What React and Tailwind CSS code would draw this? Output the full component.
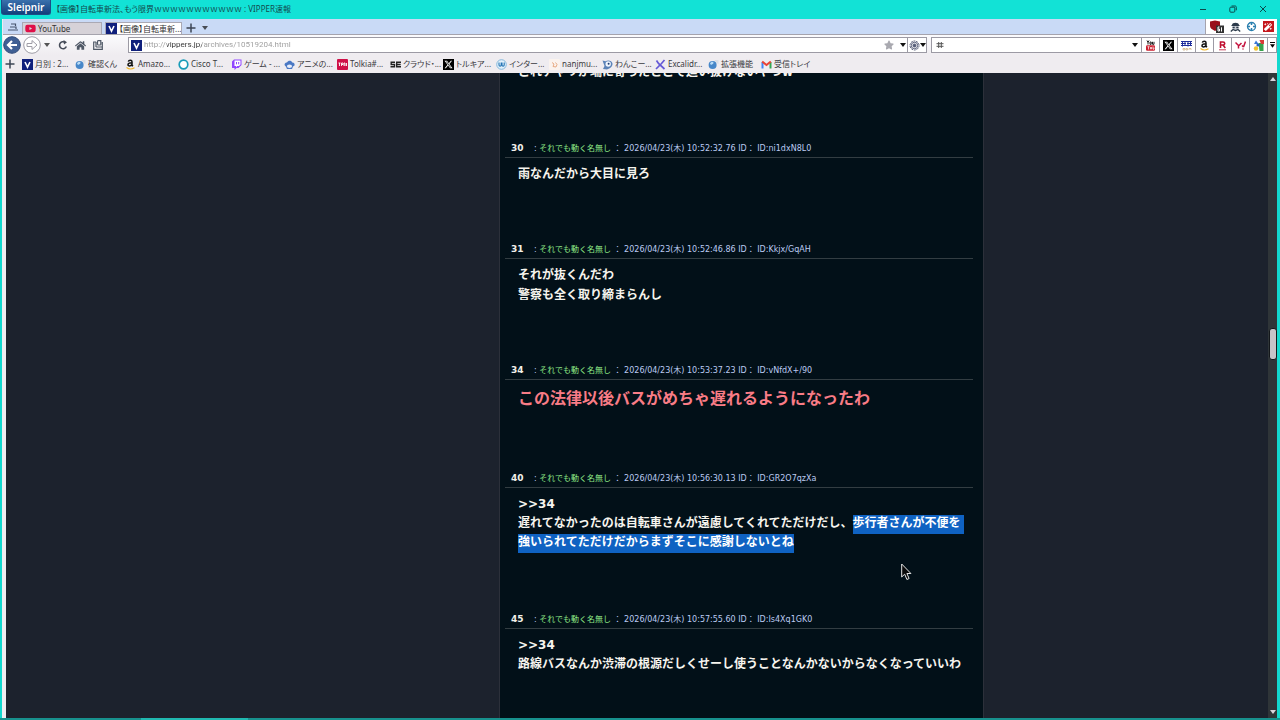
import clsx from "clsx";
import { FaHome, FaMagic, FaStar, FaYoutube } from "react-icons/fa";
import { FaXTwitter } from "react-icons/fa6";

const Caret = ({ className }) => (
  <svg viewBox="0 0 6 4" className={clsx("w-[6px] h-1 shrink-0", className)} fill="#111">
    <path d="M0 0h6L3 4z" />
  </svg>
);

const Plus = () => (
  <svg viewBox="0 0 10 10" className="w-[10px] h-[10px] shrink-0" stroke="#3d4554" strokeWidth="1.5">
    <path d="M5 .5v9M.5 5h9" />
  </svg>
);

const VIcon = () => (
  <svg viewBox="0 0 11 11" className="w-[11px] h-[11px] shrink-0">
    <rect width="11" height="11" fill="#10207c" />
    <path d="M3 3l2.5 5.2L8 3" fill="none" stroke="#fff" strokeWidth="1.6" />
  </svg>
);

const XIcon = () => (
  <span className="w-[11px] h-[11px] bg-black text-white flex items-center justify-center">
    <FaXTwitter size={9} />
  </span>
);

const GlobeIcon = () => (
  <svg viewBox="0 0 11 11" className="w-[11px] h-[11px]">
    <circle cx="4.6" cy="6" r="4" fill="#4787c9" />
    <path d="M2 4.5c1-2 3-2 3.5-1S4 5.5 3 6z" fill="#b9dcf7" />
    <path d="M6.5 1h4v4l-2-1z" fill="#d9dee6" />
  </svg>
);

const AmazonIcon = () => (
  <svg viewBox="0 0 11 11" className="w-[11px] h-[11px]" fill="none">
    <path d="M3.3 2.6C3.8.8 7 .7 7 2.8v3.6l1 .8M7 3.8C3.8 3.8 3 4.6 3 5.8c0 1.7 3.2 1.5 4-.6" stroke="#111" strokeWidth="1.5" />
    <path d="M1.5 8.5c2.5 1.8 5.5 1.8 8 .2" stroke="#f0b429" strokeWidth="1.1" />
  </svg>
);

const RingIcon = () => (
  <svg viewBox="0 0 11 11" className="w-[11px] h-[11px]">
    <circle cx="5.5" cy="5.5" r="4.3" fill="#fff" stroke="#189bb8" strokeWidth="1.7" />
  </svg>
);

const TwitchIcon = () => (
  <svg viewBox="0 0 11 11" className="w-[11px] h-[11px]">
    <path d="M1 2.5L3 .5h7.5V6l-3 3h-2l-2 2V9H1z" fill="#9146ff" />
    <path d="M3.5 1.5h6v4L8 7H6.2L5 8.2V7H3.5z" fill="#fff" />
    <path d="M5.5 3v2.3M7.7 3v2.3" stroke="#9146ff" />
  </svg>
);

const CloudIcon = () => (
  <svg viewBox="0 0 11 11" className="w-[11px] h-[11px]">
    <path d="M.5 6C.5 4 2 3.500 3 3.500 4 1 7.500 1 8.300 3.600c2 .2 2.700 1.500 2.200 3L9 7.500 8 10H3L2 7.800z" fill="#4a78c4" />
    <ellipse cx="5.5" cy="7.2" rx="2.6" ry="1.7" fill="#e8eefb" />
  </svg>
);

const TrpgIcon = () => (
  <svg viewBox="0 0 11 11" className="w-[11px] h-[11px]">
    <rect width="11" height="11" rx="1" fill="#cf1048" />
    <path d="M1.500 4h2M2.500 4v3M4.500 7V4H6v1.500H4.500M7 7V4h1v3M9.500 7V4" stroke="#fff" strokeWidth=".9" fill="none" />
  </svg>
);

const SeIcon = () => (
  <svg viewBox="0 0 11 11" className="w-[11px] h-[11px]" fill="none" stroke="#222" strokeWidth="1.4">
    <path d="M5 3.200H1.200v2.300H4.500v2.300H.5M11 3.200H6.700v4.600H11M6.700 5.500h4" />
  </svg>
);

const UIcon = () => (
  <svg viewBox="0 0 11 11" className="w-[11px] h-[11px]" fill="none">
    <circle cx="5.5" cy="5.5" r="4.8" fill="#e2f1fb" stroke="#86b8dc" />
    <path d="M3 3.500v2.500c0 1.500 2.200 1.500 2.200 0V3.500M6 3.500v2.500c0 1.500 2.200 1.500 2.200 0V3.500" stroke="#2474b5" strokeWidth="1.1" />
  </svg>
);

const NanjIcon = () => (
  <svg viewBox="0 0 11 11" className="w-[11px] h-[11px]">
    <rect width="11" height="11" rx="1" fill="#fbf3ee" />
    <path d="M3 3.500l2 1.500-1 2.500 3 .5 1-2.500-1.500-2" fill="none" stroke="#e8ab84" />
  </svg>
);

const DogIcon = () => (
  <svg viewBox="0 0 11 11" className="w-[11px] h-[11px]">
    <path d="M.5 1.500l3 .8C6 .8 10 1.500 10.500 4.500 10.800 7.500 8 9.500 5 10.500L1 10l1.500-3z" fill="#5c83b8" />
    <circle cx="6.2" cy="5" r="2.700" fill="#eef4fd" />
    <circle cx="6.6" cy="4.8" r="1" fill="#1d3a6e" />
  </svg>
);

const ExcalidrawIcon = () => (
  <svg viewBox="0 0 11 11" className="w-[11px] h-[11px]" stroke="#6558d6" fill="none">
    <path d="M1.500 1.500l2 3 6 5.500M9.500 1l-3 3.500L1 10" strokeWidth="1.7" />
  </svg>
);

const GmailIcon = () => (
  <svg viewBox="0 0 11 11" className="w-[11px] h-[11px]" fill="none" strokeWidth="2">
    <path d="M1.500 9.500V3" stroke="#4285f4" />
    <path d="M9.500 9.500V3" stroke="#34a853" />
    <path d="M1.200 2.500l4.300 3.500 4.300-3.500" stroke="#ea4335" />
  </svg>
);

const bookmarks = [
  { name: "月別 : 2...", Icon: VIcon },
  { name: "確認くん", Icon: GlobeIcon, short: true },
  { name: "Amazo...", Icon: AmazonIcon },
  { name: "Cisco T...", Icon: RingIcon },
  { name: "ゲーム - ...", Icon: TwitchIcon },
  { name: "アニメの...", Icon: CloudIcon },
  { name: "Tolkia#...", Icon: TrpgIcon },
  { name: "クラウド・...", Icon: SeIcon },
  { name: "トルキア...", Icon: XIcon },
  { name: "インター...", Icon: UIcon },
  { name: "nanjmu...", Icon: NanjIcon },
  { name: "わんこー...", Icon: DogIcon },
  { name: "Excalidr...", Icon: ExcalidrawIcon },
  { name: "拡張機能", Icon: GlobeIcon },
  { name: "受信トレイ", Icon: GmailIcon },
];

const YouTubeSearchIcon = () => (
  <svg viewBox="0 0 11 11" className="w-[11px] h-[11px]" fill="none">
    <path d="M2 .5l1 2 1-2M3 2.500V4.500M5 2h1.200v2.300H5zM7.500 1.800v2.500H9V1.800" stroke="#222" />
    <rect x="1" y="5.2" width="9" height="5.5" rx="1.2" fill="#cc2030" />
    <path d="M2.500 6.700h2M3.500 6.700v2.800M5.500 7v2h1V7M8 6.500v2.700h1V7.500" stroke="#fff" strokeWidth=".7" />
  </svg>
);

const KakakuIcon = () => (
  <svg viewBox="0 0 11 11" className="w-[11px] h-[11px]" fill="none" stroke="#1f2d9c">
    <path d="M0 1.500h11M0 3.500h5M6 3.500h5M0 5.500h11M1.500 1v5.500M4 1v5M7 1v5.500M9.500 1v5" />
    <path d="M2 8.500h2v1.500H2zM5 8.500h1.500v1.500H5zM8 10V8.500h2V10" stroke="#c9a878" strokeWidth=".7" />
  </svg>
);

const RakutenIcon = () => (
  <svg viewBox="0 0 11 11" className="w-[11px] h-[11px]" fill="none" stroke="#bf1030">
    <path d="M3.500 8V2h2.500c2.300 0 2.300 3 0 3H3.500M6 5l2.300 3" strokeWidth="1.6" />
    <path d="M2 9.800h7" strokeWidth=".8" />
  </svg>
);

const YahooIcon = () => (
  <svg viewBox="0 0 11 11" className="w-[11px] h-[11px]" fill="none" stroke="#c4103c" strokeWidth="1.5">
    <path d="M.5 2.500l3 3v3M6.500 3l-3 3M7 5.500l1.500 1.500M10.500 1.500L8.500 7M8 8.500v1" />
  </svg>
);

const MapsIcon = () => (
  <svg viewBox="0 0 11 11" className="w-[11px] h-[11px]">
    <path d="M1 4l2-3.500L5.500 4z" fill="#3b78d8" />
    <circle cx="3" cy="8.5" r="2.200" fill="#f2c230" />
    <path d="M5.500 3h5v8h-4z" fill="#35a24c" />
    <path d="M6.500 0H11v4H8z" fill="#d83a36" />
    <circle cx="5" cy="5" r="1.6" fill="#2d62c0" />
  </svg>
);

const searchSites = [
  { name: "YouTube", Icon: YouTubeSearchIcon },
  { name: "X", Icon: XIcon },
  { name: "価格.com", Icon: KakakuIcon },
  { name: "Amazon", Icon: AmazonIcon },
  { name: "楽天", Icon: RakutenIcon },
  { name: "Yahoo!", Icon: YahooIcon },
  { name: "Google", Icon: MapsIcon },
];

const Selected = ({ children, className }) => (
  <mark className={clsx("bg-[#0f62c2] text-white pt-px pb-[4px]", className)}>{children}</mark>
);

const posts = [
  {
    no: 30,
    date: "2026/04/23(木) 10:52:32.76",
    id: "ni1dxN8L0",
    lines: ["雨なんだから大目に見ろ"],
  },
  {
    no: 31,
    date: "2026/04/23(木) 10:52:46.86",
    id: "Kkjx/GqAH",
    lines: ["それが抜くんだわ", "警察も全く取り締まらんし"],
  },
  {
    no: 34,
    date: "2026/04/23(木) 10:53:37.23",
    id: "vNfdX+/90",
    variant: "big",
    lines: ["この法律以後バスがめちゃ遅れるようになったわ"],
  },
  {
    no: 40,
    date: "2026/04/23(木) 10:56:30.13",
    id: "GR2O7qzXa",
    variant: "reply",
    lines: [
      <>
        遅れてなかったのは自転車さんが遠慮してくれてただけだし、
        <Selected className="pr-[3px]">歩行者さんが不便を</Selected>
      </>,
      <Selected>強いられてただけだからまずそこに感謝しないとね</Selected>,
    ],
  },
  {
    no: 45,
    date: "2026/04/23(木) 10:57:55.60",
    id: "Is4Xq1GK0",
    variant: "reply",
    lines: ["路線バスなんか渋滞の根源だしくせーし使うことなんかないからなくなっていいわ"],
  },
];

const bodyStyles = {
  normal: "pt-[6px] pb-[55px] text-[12px] leading-5 text-[#f6f4ee]",
  big: "pt-[5px] pb-[56px] text-[16px] leading-[27px] text-[#f97c86]",
  reply: "pt-[7px] pb-[57px] text-[12px] leading-[19px] text-[#f6f4ee]",
};

const TitleBar = () => (
  <header className="h-[19px] shrink-0 flex items-start bg-[#12e2d6] pl-px">
    <button className="w-[50px] h-[15px] rounded-b-[3px] border border-t-0 border-[#1d4d86] bg-gradient-to-b from-[#3a71ad] to-[#123f7c] text-white text-[10px] leading-[14px] font-semibold">
      Sleipnir
    </button>
    <h1 className="ml-[5px] h-[18px] text-[8px] leading-[18px] text-[#134a4e] whitespace-nowrap">
      <span className="[font-feature-settings:'palt']">【画像】自転車新法、もう限界</span>
      ｗｗｗｗｗｗｗｗｗｗｗ : VIPPER速報
    </h1>
    <div className="ml-auto h-[18px] flex items-center gap-[22px] pr-[13px] text-[#0b4a4c]">
      <button aria-label="最小化">
        <svg viewBox="0 0 8 8" className="w-2 h-2" stroke="currentColor"><path d="M1 4.500h6" /></svg>
      </button>
      <button aria-label="元に戻す">
        <svg viewBox="0 0 8 8" className="w-2 h-2" fill="none" stroke="currentColor">
          <rect x=".8" y="2.2" width="5" height="5" rx="1" />
          <path d="M2.500 1h3.500c1 0 1.300.5 1.300 1.300v3" />
        </svg>
      </button>
      <button aria-label="閉じる">
        <svg viewBox="0 0 8 8" className="w-2 h-2" stroke="currentColor"><path d="M1 1l6 6M7 1L1 7" /></svg>
      </button>
    </div>
  </header>
);

const TabBar = () => (
  <div className="h-4 shrink-0 flex bg-[#c9daf6] border-b border-[#a5a3ad] text-[#333]">
    <button aria-label="タブ一覧" className="w-[19px] flex items-center justify-center">
      <svg viewBox="0 0 10 8" className="w-[10px] h-2" fill="none" stroke="#46536c" strokeWidth="1.2">
        <path d="M3 1h4.500v2M2 4h6v2M0 7h10" />
      </svg>
    </button>
    <div role="tablist" className="flex pt-[3px] text-[8px] leading-3">
      <button role="tab" aria-selected="false" className="w-[80px] flex items-center gap-[2px] pl-[2px] bg-[#d6d2d8] border border-b-0 border-[#aaa9b4]">
        <FaYoutube size={11} color="#e01048" />
        YouTube
      </button>
      <button role="tab" aria-selected="true" className="ml-[3px] w-[77px] flex items-center gap-[2px] overflow-hidden bg-white border border-b-0 border-[#aaa9b4] whitespace-nowrap [font-feature-settings:'palt']">
        <VIcon />
        【画像】自転車新...
      </button>
    </div>
    <button aria-label="新しいタブ" className="ml-[4px] pt-[2px]"><Plus /></button>
    <button aria-label="タブメニュー" className="ml-[6px] pt-[2px]"><Caret className="opacity-70" /></button>
    <div className="ml-auto w-[72px] flex items-center justify-between pl-[4px] pr-[3px] bg-white border-l border-[#a5a3ad]">
      <button aria-label="広告ブロック">
        <svg viewBox="0 0 14 13" className="w-[14px] h-[13px]">
          <path d="M5 .5l5 1v4.500c0 2-2 3.500-5 5-3-1.500-5-3-5-5V1.500z" fill="#99101c" />
          <rect x="6" y="5.5" width="8" height="7.5" fill="#333" />
          <path d="M9.500 7H8v4h1.500V9H8M11.500 7.300V11.500" fill="none" stroke="#fff" />
        </svg>
      </button>
      <button aria-label="プライバシー">
        <svg viewBox="0 0 11 11" className="w-[11px] h-[11px]">
          <path d="M2 4C2 1 9 1 9 4l1 1H1z" fill="#2c3a4a" />
          <path d="M2.500 5h6v2.500l-1 2h-4z" fill="#c8ccd4" />
          <path d="M2.500 6.500h2.200M6.300 6.500h2.200M.8 10.500L3 8.500l2.500 1 2.500-1 2.200 2" fill="none" stroke="#2c3a4a" strokeWidth="1.3" />
        </svg>
      </button>
      <button aria-label="ターゲット">
        <svg viewBox="0 0 11 11" className="w-[11px] h-[11px]" fill="none" stroke="#2b7fae">
          <circle cx="5.5" cy="5.5" r="4" strokeWidth="1.3" />
          <path d="M5.500 1v3M5.500 7v3M1 5.500h3M7 5.500h3" strokeWidth="1.5" />
        </svg>
      </button>
      <button aria-label="ツール" className="w-[11px] h-[11px] bg-[#c4161c] text-white flex items-center justify-center">
        <FaMagic size={8} />
      </button>
    </div>
  </div>
);

const AddressBar = () => (
  <div className="h-5 shrink-0 flex items-center bg-gradient-to-b from-[#fbfbfd] to-[#efecf0]">
    <button aria-label="戻る">
      <svg viewBox="0 0 18 18" className="w-[18px] h-[18px]">
        <circle cx="9" cy="9" r="8.3" fill="#3f5f94" stroke="#2f4a78" />
        <path d="M14 9H5M9 5L5 9l4 4" fill="none" stroke="#fff" strokeWidth="2.2" />
      </svg>
    </button>
    <button aria-label="進む" className="ml-[2px]">
      <svg viewBox="0 0 18 18" className="w-[18px] h-[18px]" fill="#fff" stroke="#9f9da6">
        <circle cx="9" cy="9" r="8.3" />
        <path d="M4 7.500h5V4.500L14 9l-5 4.500v-3H4z" />
      </svg>
    </button>
    <button aria-label="履歴" className="ml-[3px]"><Caret className="opacity-70" /></button>
    <button aria-label="再読み込み" className="ml-[8px]">
      <svg viewBox="0 0 10 10" className="w-[10px] h-[10px]" fill="none" stroke="#454b58" strokeWidth="1.6">
        <path d="M8.300 6.500A3.500 3.500 0 1 1 7 2.300" />
        <path d="M5.500 0L9 2.200 6 4.500z" fill="#454b58" stroke="none" />
      </svg>
    </button>
    <button aria-label="ホーム" className="ml-[7px] text-[#4f5866]"><FaHome size={11} /></button>
    <button aria-label="保存" className="ml-[7px]">
      <svg viewBox="0 0 10 10" className="w-[10px] h-[10px]" fill="none" stroke="#4f5866" strokeWidth="1.2">
        <path d="M3 2H.7v7.300h8.600V2M3 2v5M3 7h6M4.500.7h3.300v4M4.500.7v4M4.500 5h3.300" />
      </svg>
    </button>
    <form className="ml-[25px] h-4 grow flex items-center bg-white border border-[#9c9aa4]">
      <label htmlFor="url" className="px-[2px]"><VIcon /></label>
      <input
        id="url"
        aria-label="アドレス"
        defaultValue="http://vippers.jp/archives/10519204.html"
        className="grow min-w-0 h-[14px] font-['Roboto',sans-serif] text-[8px] leading-[14px] outline-none text-transparent bg-clip-text bg-[linear-gradient(to_right,#9a9a9a_23px,#333_23px,#333_58px,#9a9a9a_58px)]"
      />
      <button type="button" aria-label="お気に入り" className="text-[#a9a9b0]"><FaStar size={10} /></button>
      <button type="button" aria-label="履歴一覧" className="ml-[6px] mr-px"><Caret /></button>
      <button type="button" aria-label="エンジン" className="h-[14px] pl-px flex items-center border-l border-[#9c9aa4]">
        <svg viewBox="0 0 11 11" className="w-[11px] h-[11px]" fill="none" stroke="#555c78">
          <circle cx="5.5" cy="5.5" r="4.5" strokeDasharray="2 .8" />
          <circle cx="5.5" cy="5.5" r="3.2" />
          <circle cx="5.5" cy="5.5" r="1.5" fill="#555c78" />
        </svg>
        <Caret />
      </button>
    </form>
    <form className="ml-[4px] w-[346px] h-4 shrink-0 flex items-center bg-white border border-[#9c9aa4]">
      <label htmlFor="search" className="px-[4px]">
        <svg viewBox="0 0 8 8" className="w-2 h-2" stroke="#555"><path d="M2.700 1v6M5.300 1v6M.5 2.700h7M.5 5.300h7" /></svg>
      </label>
      <input id="search" aria-label="検索" className="grow min-w-0 h-[14px] text-[8px] outline-none" />
      <button type="button" aria-label="検索履歴" className="mr-[3px]"><Caret /></button>
      {searchSites.map(({ name, Icon }) => (
        <button key={name} type="button" aria-label={name} className="w-[18px] h-[14px] shrink-0 flex items-center justify-center border-l border-[#9c9aa4]">
          <Icon />
        </button>
      ))}
      <button type="button" aria-label="その他" className="w-[9px] h-[14px] shrink-0 flex flex-col items-center justify-center gap-px border-l border-[#9c9aa4]">
        <span className="w-[5px] h-px bg-black" />
        <svg viewBox="0 0 6 4" className="w-[5px] h-1"><path d="M0 0h6L3 4z" /></svg>
      </button>
    </form>
  </div>
);

const BookmarkBar = () => (
  <nav className="h-[18px] shrink-0 flex items-center overflow-hidden bg-[#efecf0] pl-[2px] text-[8px] text-[#3a3a40] whitespace-nowrap">
    <button aria-label="追加" className="mr-[7px]"><Plus /></button>
    {bookmarks.map(({ name, Icon, short }) => (
      <a key={name} href="#" className={clsx("shrink-0 flex items-center gap-[2px]", short ? "w-[50px]" : "w-[53px]")}>
        <Icon />
        <span className="[font-feature-settings:'palt']">{name}</span>
      </a>
    ))}
  </nav>
);

const Post = ({ post }) => (
  <article>
    <div className="h-5 flex items-baseline mr-[10px] ml-[5px] pl-[6px] pt-[4px] border-b border-[#333d42] text-[8px] leading-3 text-[#bccbf2] whitespace-nowrap">
      <b className="w-[23px] text-[9px] text-[#f3f1ea]">{post.no}</b>
      <p>
        : <span className="text-[#8fe987]">それでも動く名無し</span> ： {post.date} ID： ID:{post.id}
      </p>
    </div>
    <div className={clsx("pl-[18px] font-bold whitespace-nowrap", bodyStyles[post.variant ?? "normal"])}>
      {post.variant === "reply" && <a href="#" className="block">&gt;&gt;34</a>}
      {post.lines.map((line, i) => (
        <p key={i}>{line}</p>
      ))}
    </div>
  </article>
);

const Pointer = () => (
  <svg viewBox="0 0 11 18" className="absolute left-[401px] top-[490px] w-[11px] h-[18px]">
    <path d="M.7 1v13l3-2.800 2.200 5.300 2.200-1-2.200-5h4z" fill="#0a0a0a" stroke="#e6e6e6" />
  </svg>
);

const Scrollbar = () => (
  <div className="w-[9px] shrink-0 flex flex-col items-center bg-[#2f3538] py-[4px]">
    <svg viewBox="0 0 6 4" className="w-[6px] h-1 shrink-0" fill="#d8d4dc"><path d="M0 4h6L3 0z" /></svg>
    <div className="grow-[247]" />
    <div className="w-2 h-8 shrink-0 rounded-[3px] bg-[#c5c3c8] border border-[#14181b]" />
    <div className="grow-[349]" />
    <svg viewBox="0 0 6 4" className="w-[6px] h-1 shrink-0" fill="#d8d4dc"><path d="M0 0h6L3 4z" /></svg>
  </div>
);

export default function App() {
  return (
    <div className="h-screen flex flex-col overflow-hidden bg-[#12d8ce] font-['Noto_Sans','Noto_Sans_CJK_JP',sans-serif]">
      <TitleBar />
      <div className="grow min-h-0 flex flex-col ml-[2px] mr-[3px] pl-px bg-[#efecf0]">
        <TabBar />
        <AddressBar />
        <BookmarkBar />
        <div className="grow min-h-0 flex pl-[3px]">
          <div className="grow min-w-0 grid grid-cols-[493fr_485px_284fr] overflow-hidden bg-[#1c222d]">
            <main className="relative col-start-2 min-h-0 overflow-hidden bg-[#021018] border-x border-[#2c303a] font-['DejaVu_Sans','Noto_Sans_CJK_JP',sans-serif]">
              <p className="-mt-[11px] pl-[18px] pb-14 text-[12px] leading-5 font-bold text-[#f6f4ee] whitespace-nowrap">
                これチャリが端に寄ったとこで追い抜けないやつw
              </p>
              {posts.map((post) => (
                <Post key={post.no} post={post} />
              ))}
              <Pointer />
            </main>
          </div>
          <Scrollbar />
        </div>
      </div>
      <footer className="h-[2px] shrink-0 bg-[#17918d] pl-[141px]">
        <div className="w-[107px] h-[2px] bg-[#20b8b0]" />
      </footer>
    </div>
  );
}
